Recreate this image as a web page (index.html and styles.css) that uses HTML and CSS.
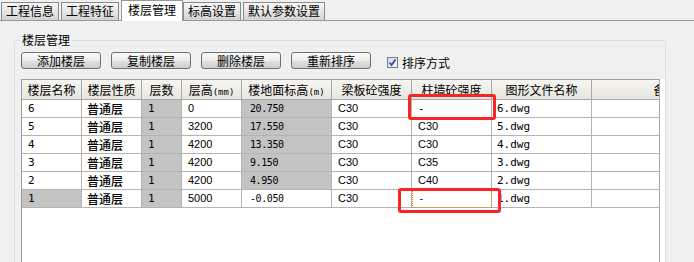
FILE: index.html
```html
<!DOCTYPE html>
<html lang="zh-CN">
<head>
  <meta charset="UTF-8">
  <title>楼层管理</title>
  <link rel="stylesheet" href="styles.css">
</head>
<body>

<div class="tabs">
  <div class="tab">工程信息</div>
  <div class="tab">工程特征</div>
  <div class="tab active">楼层管理</div>
  <div class="tab">标高设置</div>
  <div class="tab">默认参数设置</div>
</div>

<fieldset class="group">
  <legend>楼层管理</legend>
  <div class="toolbar">
    <div class="btn">添加楼层</div>
    <div class="btn">复制楼层</div>
    <div class="btn">删除楼层</div>
    <div class="btn">重新排序</div>
    <label class="check">
      <span class="box">
        <svg width="9" height="9" viewBox="0 0 9 9"><path d="M1.5 4.5 L3.5 7 L7.5 1.5" fill="none" stroke="#3150a8" stroke-width="1.8"/></svg>
      </span>
      排序方式
    </label>
  </div>

  <div class="grid">
    <div class="sheet">
      <div class="row head">
        <div>楼层名称</div>
        <div>楼层性质</div>
        <div>层数</div>
        <div>层高<span class="unit">(mm)</span></div>
        <div>楼地面标高<span class="unit">(m)</span></div>
        <div>梁板砼强度</div>
        <div>柱墙砼强度</div>
        <div>图形文件名称</div>
        <div>备注</div>
      </div>
      <div class="row">
        <div class="mono">6</div><div class="cn">普通层</div><div class="g mono">1</div><div>0</div><div class="g num">20.750</div><div>C30</div><div class="mono">-</div><div class="file">6.dwg</div><div></div>
      </div>
      <div class="row">
        <div class="mono">5</div><div class="cn">普通层</div><div class="g mono">1</div><div>3200</div><div class="g num">17.550</div><div>C30</div><div>C30</div><div class="file">5.dwg</div><div></div>
      </div>
      <div class="row">
        <div class="mono">4</div><div class="cn">普通层</div><div class="g mono">1</div><div>4200</div><div class="g num">13.350</div><div>C30</div><div>C30</div><div class="file">4.dwg</div><div></div>
      </div>
      <div class="row">
        <div class="mono">3</div><div class="cn">普通层</div><div class="g mono">1</div><div>4200</div><div class="g num">9.150</div><div>C30</div><div>C35</div><div class="file">3.dwg</div><div></div>
      </div>
      <div class="row">
        <div class="mono">2</div><div class="cn">普通层</div><div class="g mono">1</div><div>4200</div><div class="g num">4.950</div><div>C30</div><div>C40</div><div class="file">2.dwg</div><div></div>
      </div>
      <div class="row">
        <div class="g mono">1</div><div class="cn">普通层</div><div class="g mono">1</div><div>5000</div><div class="num">-0.050</div><div>C30</div><div class="mono focus">-</div><div class="file">1.dwg</div><div></div>
      </div>
    </div>
    <div class="mark mark-top"></div>
    <div class="mark mark-bottom"></div>
  </div>
</fieldset>

</body>
</html>
```

FILE: styles.css
```css
* {
  box-sizing: border-box;
  margin: 0;
  padding: 0;
}
body {
  font-family: "Noto Sans CJK SC", sans-serif;
  font-size: 12px;
  color: #000;
  background: #f0f0f0;
  width: 694px;
  height: 262px;
  overflow: hidden;
}

/* tabs */
.tabs {
  display: flex;
  align-items: flex-end;
  height: 21px;
  padding-left: 1px;
  border-bottom: 1px solid #919b9c;
}
.tab {
  height: 18px;
  line-height: 16px;
  padding: 0 4px;
  margin-right: 2px;
  border: 1px solid #8a8a8a;
  border-bottom: none;
  background: linear-gradient(#f7f7f7, #e2e2e2 60%, #d2d2d2);
}
.tab.active {
  height: 21px;
  line-height: 18px;
  margin-bottom: -1px;
  margin-right: 0;
  padding: 0 6px;
  background: #fff;
  border-color: #919b9c;
}

/* group box */
.group {
  margin: 12px 28px 0 14px;
  height: 260px;
  border: 1px solid #d5dfe5;
  border-radius: 3px;
}
.group legend {
  margin-left: 5px;
  padding: 0 2px;
  line-height: 14px;
}
.toolbar {
  display: flex;
  gap: 10px;
  margin-top: 5px;
  padding-left: 6px;
  height: 17px;
}
.btn {
  width: 80px;
  height: 17px;
  line-height: 15px;
  text-align: center;
  border: 1px solid #707070;
  border-radius: 3px;
  background: linear-gradient(#fbfbfb, #ececec 50%, #dedede 55%, #cfcfcf);
}
.check {
  display: flex;
  align-items: center;
  gap: 4px;
  margin-left: 6px;
  margin-top: 4px;
  line-height: 14px;
}
.box {
  display: flex;
  align-items: center;
  justify-content: center;
  width: 11px;
  height: 11px;
  border: 1px solid #6f7f95;
  background: linear-gradient(135deg, #dcdcdc, #f4f4f4);
}

/* floor grid */
.grid {
  position: relative;
  margin: 10px 0 0 6px;
  height: 200px;
  background: #fff;
  border-left: 1px solid #9d9d9d;
}
.sheet {
  width: 638px;
  height: 100%;
  overflow: hidden;
  border-right: 1px solid #a8a8a8;
}
.row {
  display: grid;
  grid-template-columns: 60px 60px 40px 60px 90px 80px 80px 100px 148px;
  height: 18px;
}
.row div {
  border-right: 1px solid #b4b4b4;
  border-bottom: 1px solid #b4b4b4;
  padding-left: 6px;
  line-height: 17px;
  white-space: nowrap;
  overflow: hidden;
  font-family: "Liberation Sans", sans-serif;
  font-size: 11px;
}
.row.head {
  height: 21px;
  border-top: 1px solid #a0a0a0;
}
.row.head div {
  padding: 0;
  text-align: center;
  line-height: 19px;
  font-family: "Noto Sans CJK SC", sans-serif;
  font-size: 12px;
  border-right-color: #a8a8a8;
  border-bottom-color: #a8a8a8;
  background: linear-gradient(#f6f5f0, #e6e5de);
}
.row.head .unit {
  font-size: 9px;
  font-family: "DejaVu Sans Mono", monospace;
}
.row .cn {
  padding-left: 5px;
  font-family: "Noto Sans CJK SC", sans-serif;
  font-size: 12px;
  font-weight: 500;
}
.row .mono {
  font-family: "DejaVu Sans Mono", monospace;
  font-size: 11px;
}
.row .num {
  padding-left: 8px;
  font-family: "DejaVu Sans Mono", monospace;
  font-size: 10px;
  letter-spacing: -0.4px;
}
.row .file {
  padding-left: 5px;
  font-family: "DejaVu Sans Mono", monospace;
  font-size: 11px;
}
.row .g {
  background: #c3c3c3;
}
.row .focus {
  color: #0000ff;
  outline: 1px dotted #d98c00;
  outline-offset: -1px;
}

/* red annotation boxes */
.mark {
  position: absolute;
  border: 3px solid #f72525;
  border-radius: 3px;
}
.mark-top {
  left: 386px;
  top: 15px;
  width: 88px;
  height: 26px;
}
.mark-bottom {
  left: 376px;
  top: 109px;
  width: 103px;
  height: 25px;
}
```
